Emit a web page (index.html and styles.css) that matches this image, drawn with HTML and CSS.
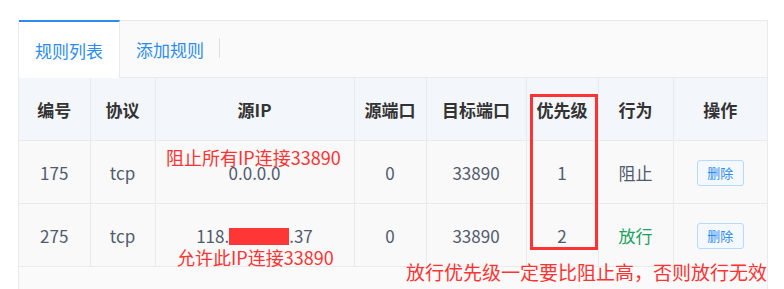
FILE: index.html
```html
<!DOCTYPE html>
<html lang="zh-CN">
<head>
    <meta charset="UTF-8">
    <title>规则列表</title>
    <link rel="stylesheet" href="styles.css">
</head>
<body>
    <div class="page">
        <div class="panel">
            <div class="tabs">
                <div class="tab active">规则列表</div>
                <div class="tab">添加规则</div>
            </div>
            <table class="rules">
                <colgroup>
                    <col style="width:71px">
                    <col style="width:65px">
                    <col style="width:199px">
                    <col style="width:72px">
                    <col style="width:100px">
                    <col style="width:72px">
                    <col style="width:75px">
                    <col>
                </colgroup>
                <thead>
                    <tr>
                        <th>编号</th><th>协议</th><th>源IP</th><th>源端口</th>
                        <th>目标端口</th><th>优先级</th><th>行为</th><th>操作</th>
                    </tr>
                </thead>
                <tbody>
                    <tr>
                        <td>175</td><td>tcp</td><td>0.0.0.0</td><td>0</td>
                        <td>33890</td><td>1</td><td>阻止</td>
                        <td><button class="del">删除</button></td>
                    </tr>
                    <tr>
                        <td>275</td><td>tcp</td><td>118.<span class="redact"></span>.37</td><td>0</td>
                        <td>33890</td><td>2</td><td class="allow">放行</td>
                        <td><button class="del">删除</button></td>
                    </tr>
                </tbody>
            </table>
        </div>

        <!-- 截图上的标注 -->
        <div class="mark-box"></div>
        <div class="note note-1">阻止所有IP连接33890</div>
        <div class="note note-2">允许此IP连接33890</div>
        <div class="note note-3">放行优先级一定要比阻止高，否则放行无效</div>
    </div>
</body>
</html>
```

FILE: styles.css
```css
body { margin: 0; background: #fff; font-family: "Noto Sans CJK SC", "Microsoft YaHei", sans-serif; color: #515a6e; }
.page { position: relative; height: 289px; overflow: hidden; }
.panel { margin: 20px 16px 0 18px; border: 1px solid #e8eaec; background: #fafafa; height: 300px; }

.tabs { display: flex; height: 56px; border-bottom: 1px solid #e8eaec; }
.tab { padding: 0 16px; font-size: 17px; color: #2d8cf0; display: flex; align-items: center; position: relative; }
.tab.active { background: #fff; border-top: 2px solid #2d8cf0; margin-top: -1px; margin-bottom: -1px; border-right: 1px solid #e8eaec; }
.tab:not(.active)::after { content: ""; position: absolute; right: 0; top: 17px; height: 20px; border-right: 1px solid #dcdee2; }

.rules { width: 100%; border-collapse: collapse; table-layout: fixed; }
.rules th, .rules td { text-align: center; border-right: 1px solid #e8eaec; border-bottom: 1px solid #e8eaec; padding: 0; font-size: 17px; }
.rules th:last-child, .rules td:last-child { border-right: none; }
.rules th { height: 62px; background: #f3f6fb; color: #333; font-weight: bold; }
.rules td { height: 62px; background: #f9f9f9; }
.rules td.allow { color: #19a15f; }

.redact { display: inline-block; width: 60px; height: 17px; background: #fe3636; vertical-align: -2px; }

.del { font-family: inherit; font-size: 13px; color: #2d8cf0; background: #f4f9ff; border: 1px solid #b7dafe; border-radius: 3px; width: 47px; height: 26px; padding: 0; cursor: pointer; }

.mark-box { position: absolute; left: 530px; top: 94px; width: 62px; height: 150px; border: 3px solid #fe3333; }
.note { position: absolute; color: #fe3333; white-space: nowrap; line-height: 1; }
.note-1 { left: 166px; top: 148px; font-size: 18px; }
.note-2 { left: 177px; top: 248px; font-size: 18px; }
.note-3 { left: 406px; top: 262px; font-size: 19px; }
```
